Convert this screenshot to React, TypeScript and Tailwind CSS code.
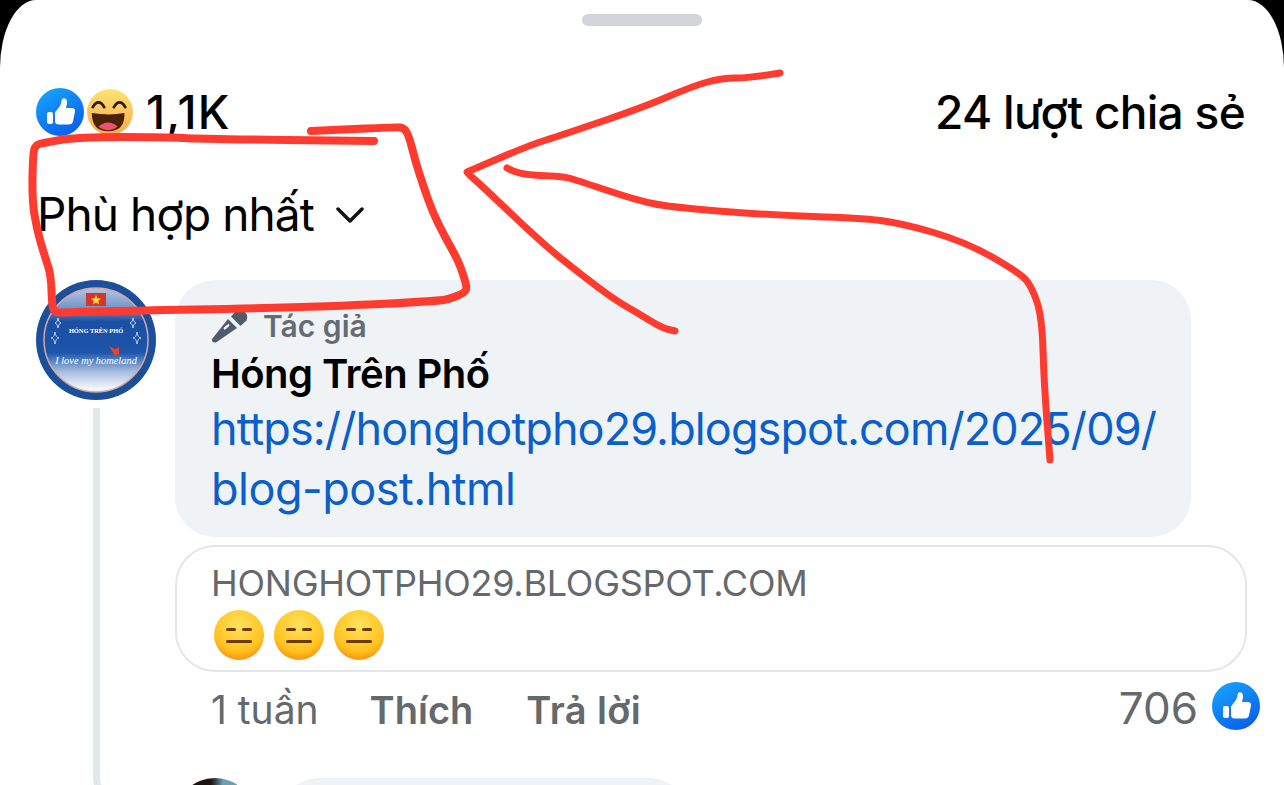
type Pt = [number, number];

// hand drawn marks: run a quadratic through the midpoints so the line stays soft
const smooth = (pts: Pt[]) => {
  let d = `M${pts[0][0]} ${pts[0][1]}`;
  for (let i = 1; i < pts.length - 1; i++) {
    const mx = (pts[i][0] + pts[i + 1][0]) / 2;
    const my = (pts[i][1] + pts[i + 1][1]) / 2;
    d += ` Q${pts[i][0]} ${pts[i][1]} ${mx} ${my}`;
  }
  const last = pts[pts.length - 1];
  return `${d} L${last[0]} ${last[1]}`;
};

const boxPts: Pt[] = [
  [311, 131], [333, 130], [397, 127], [404, 128], [409, 136], [415, 160], [424, 188], [433, 213], [445, 237], [458, 260], [464, 277],
  [467, 288], [464, 293], [452, 298], [440, 301], [320, 307], [70, 312], [55, 313], [52, 306], [51, 275], [45, 257], [37, 230], [32, 200], [33, 152],
  [36, 145], [43, 143], [77, 137], [167, 137], [200, 139], [374, 141],
];
const arrowPts: Pt[] = [
  [780, 73], [750, 78], [722, 78], [693, 86], [644, 107], [562, 135], [530, 145], [467, 172], [467, 172], [467, 173], [481, 185], [542, 243], [579, 273], [615, 300], [636, 312],
  [662, 328], [675, 331],
];
const tailPts: Pt[] = [
  [507, 168], [518, 175], [562, 176], [579, 181], [636, 200], [669, 207], [767, 215], [860, 218], [901, 223], [966, 242], [1020, 273],
  [1032, 287], [1042, 317], [1044, 383], [1050, 460],
];

function LikeBadge({ id }: { id: string }) {
  return (
    <svg width="48" height="48" viewBox="0 0 48 48" className="shrink-0">
      <defs>
        <linearGradient id={id} x1="0" y1="0" x2="0.6" y2="1">
          <stop offset="0" stopColor="#18a9ff" />
          <stop offset="1" stopColor="#0a62ea" />
        </linearGradient>
      </defs>
      <circle cx="24" cy="24" r="24" fill={`url(#${id})`} />
      <rect x="11" y="24" width="6" height="12" rx="2" fill="#fff" />
      <path
        d="M19 24.5 L24 18 Q25.5 15.5 25.5 12.5 Q26 10 28 10.2 Q31.5 10.8 31 15.5 L30 20 L36.5 20 Q39.5 20.5 39 23.5 L37 33.5 Q36 36.5 33 36.5 L23 36.5 Q19 36.5 19 33 Z"
        fill="#fff"
      />
    </svg>
  );
}

function HahaEmoji() {
  return (
    <svg width="46" height="48" viewBox="0 0 48 48" className="shrink-0">
      <defs>
        <linearGradient id="hahaFill" x1="0" y1="0" x2="0" y2="1">
          <stop offset="0" stopColor="#ffe372" />
          <stop offset="1" stopColor="#f8a94a" />
        </linearGradient>
      </defs>
      <circle cx="24" cy="24" r="24" fill="url(#hahaFill)" />
      <path d="M6 19 Q12 9 18 19" fill="none" stroke="#2b1a10" strokeWidth="2.8" strokeLinecap="round" />
      <path d="M28 19 Q34 9 40 19" fill="none" stroke="#2b1a10" strokeWidth="2.8" strokeLinecap="round" />
      <path d="M5 25 Q23 28 39 25 Q40 44 22 44 Q5 44 5 25 Z" fill="#4a2208" />
      <path d="M12 39 Q22 31 32 39 Q22 47 12 39 Z" fill="#f0506e" />
    </svg>
  );
}

function FlatFace() {
  return (
    <svg width="50" height="50" viewBox="0 0 50 50" className="shrink-0">
      <defs>
        <radialGradient id="flatFill" cx="0.5" cy="0.3" r="0.75">
          <stop offset="0" stopColor="#ffe25c" />
          <stop offset="0.7" stopColor="#ffc21f" />
          <stop offset="1" stopColor="#f58a0a" />
        </radialGradient>
      </defs>
      <circle cx="25" cy="25" r="25" fill="url(#flatFill)" />
      <rect x="12" y="18" width="10" height="3" rx="1.5" fill="#6b3a06" />
      <rect x="28" y="18" width="10" height="3" rx="1.5" fill="#6b3a06" />
      <rect x="12" y="30" width="26" height="3" rx="1.5" fill="#6b3a06" />
    </svg>
  );
}

function Avatar() {
  return (
    <svg width="120" height="120" viewBox="0 0 120 120" className="shrink-0">
      <defs>
        <linearGradient id="avatarFill" x1="0" y1="0" x2="0" y2="1">
          <stop offset="0" stopColor="#b3c6e4" />
          <stop offset="0.2" stopColor="#6f93c8" />
          <stop offset="0.32" stopColor="#1a4fa3" />
          <stop offset="0.62" stopColor="#1c55ab" />
          <stop offset="0.8" stopColor="#a4bbdd" />
          <stop offset="0.96" stopColor="#f2f5fa" />
        </linearGradient>
      </defs>
      <circle cx="60" cy="60" r="60" fill="#1c4f99" />
      <circle cx="60" cy="60" r="52" fill="url(#avatarFill)" stroke="#d6a6a8" strokeWidth="1.5" />
      <rect x="50" y="13" width="20" height="13" fill="#d8352a" />
      <path d="M60 15 L61.4 18.4 L65 18.6 L62.2 20.9 L63.1 24.4 L60 22.5 L56.9 24.4 L57.8 20.9 L55 18.6 L58.6 18.4 Z" fill="#ffd83a" />
      <text x="60" y="53" textAnchor="middle" fontSize="6.4" fontWeight="700" fill="#fff" fontFamily="'Liberation Serif', serif">
        HÓNG TRÊN PHỐ
      </text>
      <text x="60" y="84" textAnchor="middle" fontSize="10.4" fontStyle="italic" fill="#fff" fontFamily="'Liberation Serif', serif">
        I love my homeland
      </text>
      <path d="M73 66 L79 69 L83 67 L83 74 L79 76 Z" fill="#e4452d" />
      <path
        d="M19 52 Q19.5 57.5 23 58 Q19.5 58.5 19 64 Q18.5 58.5 15 58 Q18.5 57.5 19 52 Z M22 38 Q22.3 42.5 25 43 Q22.3 43.5 22 48 Q21.7 43.5 19 43 Q21.7 42.5 22 38 Z M101 52 Q101.5 57.5 105 58 Q101.5 58.5 101 64 Q100.5 58.5 97 58 Q100.5 57.5 101 52 Z M97 38 Q97.3 42.5 100 43 Q97.3 43.5 97 48 Q96.7 43.5 94 43 Q96.7 42.5 97 38 Z"
        fill="none"
        stroke="#dfe8f6"
        strokeWidth="0.8"
      />
    </svg>
  );
}

function MicIcon() {
  return (
    <svg width="38" height="34" viewBox="0 0 38 34" className="shrink-0">
      <path d="M1 30 L17 10 L26 19 L5 33.5 Q2.5 34 1 32 Z" fill="#515c6a" />
      <path d="M20 7.5 L25.5 1.5 Q30 -0.5 34 3 Q37.5 7 35.5 11.5 L29.5 17 Z" fill="#515c6a" />
      <rect x="12" y="17" width="7" height="2.4" rx="1.2" fill="#eff3f6" transform="rotate(-42 15 18)" />
    </svg>
  );
}

export default function App() {
  return (
    <div className="relative h-[785px] w-[1284px] overflow-hidden bg-black font-['Inter',sans-serif]">
      <div className="flex h-full flex-col overflow-hidden rounded-tl-[36px_68px] rounded-tr-[36px_68px] bg-white">
        <div className="mx-auto mt-[14px] h-3 w-[120px] shrink-0 rounded-full bg-[#d2d5d9]" />
        <div className="mt-[62px] flex h-12 shrink-0 items-center justify-between pl-9 pr-[39px] text-black">
          <div className="flex items-center">
            <LikeBadge id="likeTop" />
            <span className="ml-[3px]">
              <HahaEmoji />
            </span>
            <span className="ml-[13px] text-[46px] font-[550] tracking-[1.2px]">1,1K</span>
          </div>
          <span className="text-[46px] font-[550] tracking-[-0.7px]">24 lượt chia sẻ</span>
        </div>
        <div className="mt-[54px] flex h-12 shrink-0 items-center pl-[37px] text-black">
          <span className="text-[46px] tracking-[-0.9px]">Phù hợp nhất</span>
          <svg width="28" height="16" viewBox="0 0 28 16" className="ml-[22px] mt-[2px]">
            <path d="M2 2 L14 14 L26 2" fill="none" stroke="#111" strokeWidth="3.5" strokeLinecap="round" strokeLinejoin="round" />
          </svg>
        </div>
        <div className="mt-[42px] flex shrink-0 pl-9 pr-[37px]">
          <div className="flex w-[120px] shrink-0 flex-col">
            <Avatar />
            <div className="ml-[57px] mt-2 h-[405px] w-10 rounded-bl-[36px] border-b-[7px] border-l-[7px] border-[#e0e8ec]" />
          </div>
          <div className="ml-[19px] min-w-0 flex-1">
            <div className="w-[1016px] rounded-[40px] bg-[#eff3f6] pb-[18px] pl-[36px] pr-4 pt-[28px]">
              <div className="flex h-9 items-center gap-[14px] text-[30px] font-semibold text-[#656b73]">
                <MicIcon />
                <span>Tác giả</span>
              </div>
              <div className="mt-[6px] text-[40px] font-semibold leading-[48px] tracking-[-0.55px] text-black">Hóng Trên Phố</div>
              <div className="mt-px text-[45px] leading-[60px] text-[#0b5fcc]">
                <div className="tracking-[-0.9px]">https://honghotpho29.blogspot.com/2025/09/</div>
                <div className="tracking-[-0.5px]">blog-post.html</div>
              </div>
            </div>
            <div className="mt-2 h-[127px] rounded-[40px] border-2 border-[#e4e6e9] pl-[34px] pt-4">
              <div className="text-[36px] leading-10 tracking-[-0.25px] text-[#65686c]">HONGHOTPHO29.BLOGSPOT.COM</div>
              <div className="mt-[7px] flex gap-[10px] pl-[3px]">
                <FlatFace />
                <FlatFace />
                <FlatFace />
              </div>
            </div>
            <div className="mt-[10px] flex h-12 items-center pl-[36px] text-[#65686c]">
              <div className="flex items-center pt-2">
                <span className="text-[39px]">1 tuần</span>
                <span className="ml-[51px] text-[38px] font-semibold">Thích</span>
                <span className="ml-[53px] text-[38px] font-semibold tracking-[0.4px]">Trả lời</span>
              </div>
              <span className="ml-auto pt-1 text-[44px]">706</span>
              <span className="-mr-[13px] ml-[14px]">
                <LikeBadge id="likeRow" />
              </span>
            </div>
            <div className="mt-12 flex gap-6">
              <div className="size-20 shrink-0 rounded-full bg-gradient-to-r from-[#1d1410] from-45% to-[#6aa0b4] to-60%" />
              <div className="h-[100px] w-[410px] rounded-[40px] bg-[#eff3f6]" />
            </div>
          </div>
        </div>
      </div>
      <svg width="1284" height="785" viewBox="0 0 1284 785" fill="none" className="pointer-events-none absolute left-0 top-0">
        <path d={smooth(boxPts)} stroke="#ff3b30" strokeWidth="8" strokeLinecap="round" strokeLinejoin="round" />
        <path d={smooth(arrowPts)} stroke="#ff3b30" strokeWidth="7" strokeLinecap="round" strokeLinejoin="round" />
        <path d={smooth(tailPts)} stroke="#ff3b30" strokeWidth="7" strokeLinecap="round" strokeLinejoin="round" />
      </svg>
    </div>
  );
}
